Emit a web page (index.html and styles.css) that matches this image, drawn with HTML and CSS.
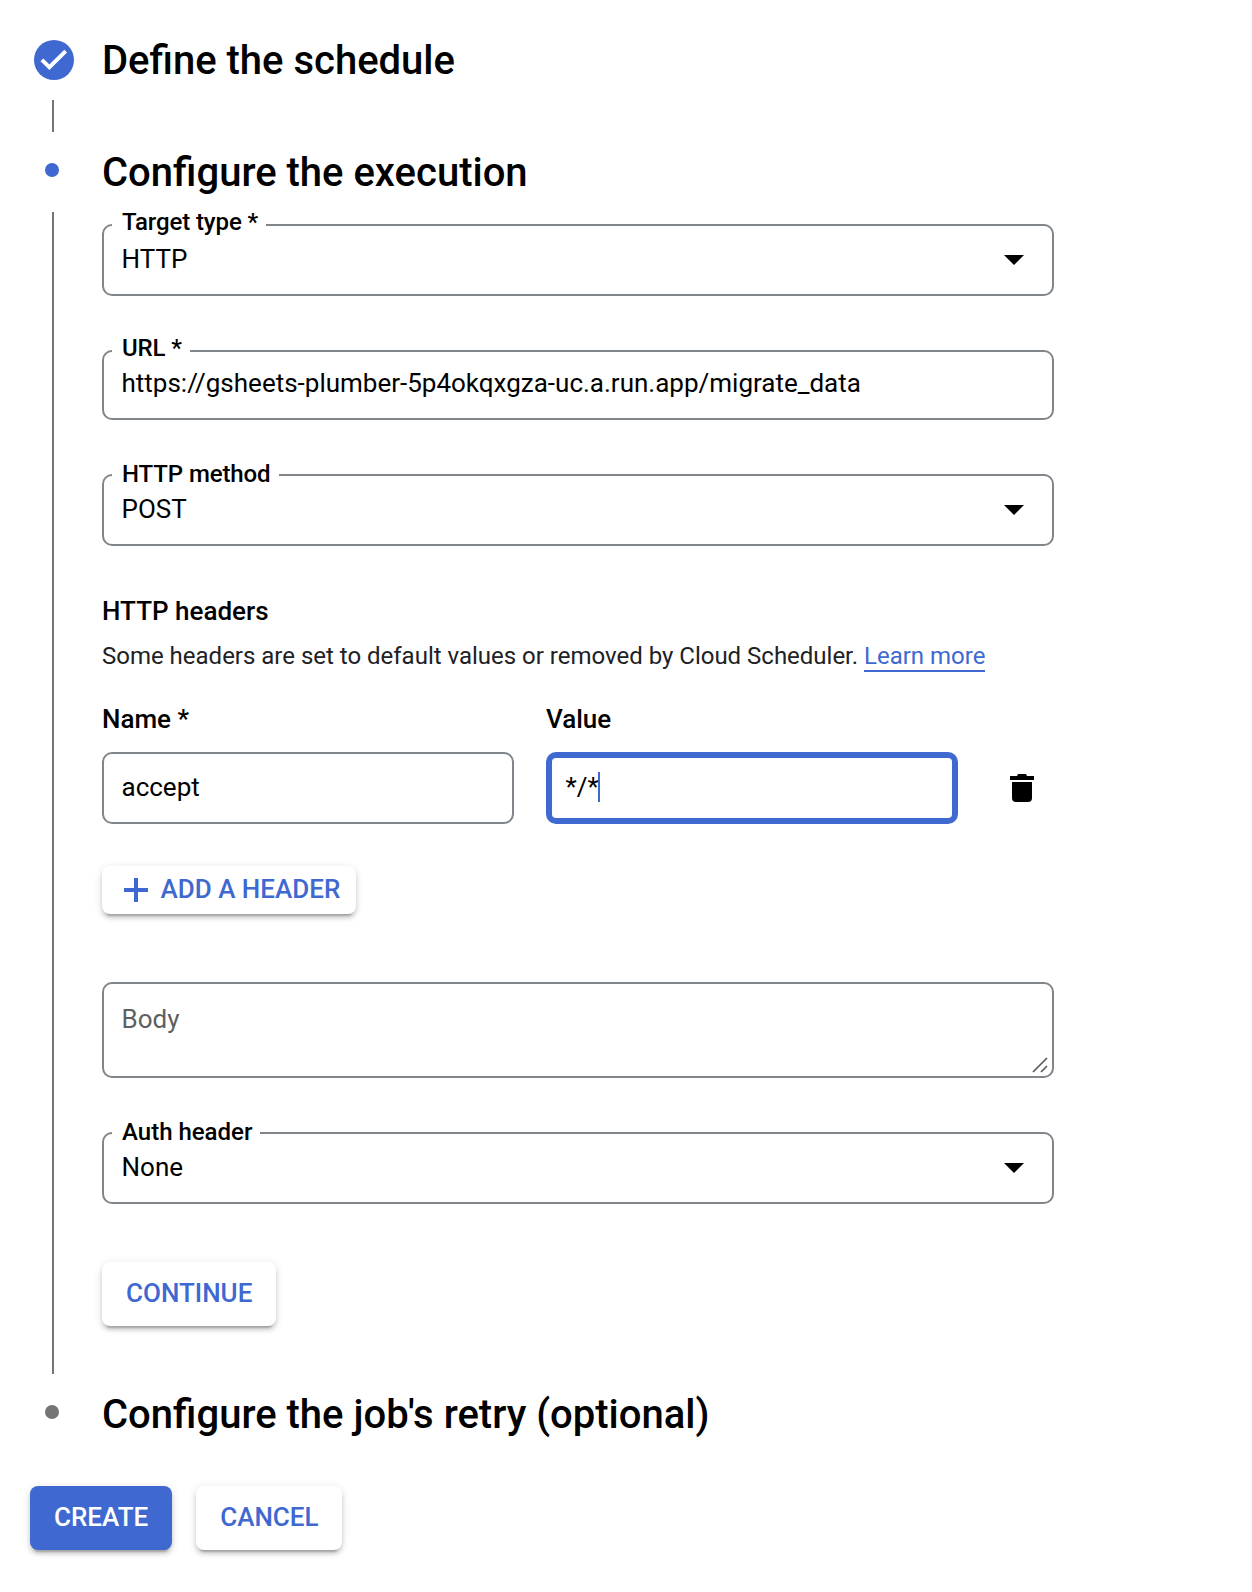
FILE: index.html
```html
<!DOCTYPE html>
<html lang="en">
<head>
<meta charset="utf-8">
<title>Create a job</title>
<link rel="stylesheet" href="styles.css">
</head>
<body>
<main class="page">
  <section class="step step-done">
    <div class="rail">
      <svg class="check" viewBox="0 0 40 40"><circle cx="20" cy="20" r="20" fill="#3f68d0"/><path d="M7.9 19.8 15.4 27.2 31.7 11.2" fill="none" stroke="#fff" stroke-width="3.9"/></svg>
      <span class="line"></span>
    </div>
    <h2 class="title">Define the schedule</h2>
  </section>

  <section class="step step-active">
    <div class="rail">
      <span class="dot dot-active"></span>
      <span class="line"></span>
    </div>
    <div class="content">
      <h2 class="title">Configure the execution</h2>

      <div class="field field-target">
        <span class="label">Target type *</span>
        <span class="text">HTTP</span>
        <svg class="arrow" viewBox="0 0 20 10"><path d="M0 0h20L10 10z"/></svg>
      </div>
      <div class="field field-url">
        <span class="label">URL *</span>
        <span class="text">https://gsheets-plumber-5p4okqxgza-uc.a.run.app/migrate_data</span>
      </div>
      <div class="field field-method">
        <span class="label">HTTP method</span>
        <span class="text">POST</span>
        <svg class="arrow" viewBox="0 0 20 10"><path d="M0 0h20L10 10z"/></svg>
      </div>

      <h3 class="subtitle">HTTP headers</h3>
      <p class="hint">Some headers are set to default values or removed by Cloud Scheduler. <a class="link">Learn more</a></p>

      <div class="header-grid">
        <span class="column-name">Name *</span>
        <span class="column-name">Value</span>
        <span></span>
        <div class="input"><span class="text">accept</span></div>
        <div class="input input-focused"><span class="text">*/*</span><span class="caret"></span></div>
        <svg class="trash" viewBox="0 0 24 28"><path d="M0 2h7l1-2h8l1 2h7v4H0zM2 8h20v16a4 4 0 0 1-4 4H6a4 4 0 0 1-4-4z"/></svg>
      </div>

      <button class="button button-add">
        <svg class="plus" viewBox="0 0 24 24"><path d="M10 0h4v10h10v4H14v10h-4V14H0v-4h10z"/></svg>
        <span class="button-text">ADD A HEADER</span>
      </button>

      <div class="body-field">
        <span class="placeholder">Body</span>
        <svg class="resizer" viewBox="0 0 16 16"><path d="M1 15 15 1M9 15l6-6" fill="none" stroke="#555" stroke-width="1.6"/></svg>
      </div>

      <div class="field field-auth">
        <span class="label">Auth header</span>
        <span class="text">None</span>
        <svg class="arrow" viewBox="0 0 20 10"><path d="M0 0h20L10 10z"/></svg>
      </div>

      <button class="button button-continue">CONTINUE</button>
    </div>
  </section>

  <section class="step step-pending">
    <div class="rail"><span class="dot"></span></div>
    <h2 class="title">Configure the job's retry (optional)</h2>
  </section>

  <div class="actions">
    <button class="button button-primary">CREATE</button>
    <button class="button button-cancel">CANCEL</button>
  </div>
</main>
</body>
</html>
```
FILE: styles.css
```css
* {
  box-sizing: border-box;
}

body {
  margin: 0;
  background: #fff;
  color: #000;
  font-family: Roboto, "Liberation Sans", sans-serif;
}

.page {
  width: 1252px;
  height: 1592px;
  padding: 36px 0 0 30px;
}

.step {
  display: flex;
  width: 1024px;
}

.step-done {
  height: 112px;
}

.step-active {
  height: 1242px;
}

.step-pending {
  height: 96px;
}

.rail {
  display: flex;
  flex-direction: column;
  flex: none;
  width: 72px;
}

.content {
  flex: 1;
  display: flex;
  flex-direction: column;
  align-items: flex-start;
}

.title {
  margin: 0;
  font-size: 40px;
  font-weight: 500;
  line-height: 50px;
}

.check {
  width: 40px;
  height: 40px;
  margin: 4px 0 20px 4px;
}

.line {
  width: 2px;
  margin-left: 22px;
  background: #757575;
}

.step-done .line {
  height: 32px;
}

.step-active .line {
  height: 1162px;
}

.dot {
  width: 14px;
  height: 14px;
  margin: 15px 0 35px 15px;
  border-radius: 50%;
  background: #757575;
}

.dot-active {
  background: #3f68d0;
}

.field {
  position: relative;
  display: flex;
  align-items: center;
  justify-content: space-between;
  width: 952px;
  height: 72px;
  padding: 0 28px 0 17.5px;
  border: 2px solid #80868b;
  border-radius: 10px;
}

.field-target {
  margin-top: 26px;
}

.field-url {
  height: 70px;
  margin-top: 54px;
}

.field-method {
  margin-top: 54px;
}

.field-auth {
  margin-top: 54px;
}

.label {
  position: absolute;
  left: 8px;
  top: -18px;
  padding: 0 8px 0 10px;
  background: #fff;
  font-size: 24px;
  font-weight: 500;
  line-height: 28px;
  letter-spacing: -0.1px;
}

.field-method .label,
.field-auth .label {
  top: -16px;
}

.field-auth .label {
  letter-spacing: 0;
}

.text {
  font-size: 26px;
  line-height: 30px;
}

.field .text {
  padding-bottom: 2px;
}

.field-url .text {
  padding-bottom: 4px;
}

.field-method .text {
  padding-bottom: 2px;
}

.arrow {
  width: 20px;
  height: 10px;
}

.field-target .arrow {
  margin-bottom: 1px;
}

.subtitle {
  margin: 50px 0 0;
  font-size: 26px;
  font-weight: 500;
  line-height: 30px;
}

.hint {
  margin: 15px 0 0;
  color: #202124;
  font-size: 24px;
  line-height: 30px;
  letter-spacing: -0.008px;
  white-space: nowrap;
}

.link {
  border-bottom: 2px solid #3f68d0;
  color: #3f68d0;
}

.header-grid {
  display: grid;
  grid-template-columns: 412px 412px 24px;
  column-gap: 32px;
  row-gap: 18px;
  margin-top: 33px;
}

.column-name {
  font-size: 26px;
  font-weight: 500;
  line-height: 30px;
}

.input {
  display: flex;
  align-items: center;
  height: 72px;
  padding: 0 17.5px 2px;
  border: 2px solid #80868b;
  border-radius: 10px;
}

.input-focused {
  padding: 0 13.5px 2px;
  border: 6px solid #3f68d0;
}

.caret {
  width: 2px;
  height: 30px;
  margin-left: -0.6px;
  background: #3f68d0;
}

.trash {
  width: 24px;
  height: 28px;
  margin: 22px 0 0 20px;
}

.button {
  height: 64px;
  padding: 0 24px 2px;
  border: 0;
  border-radius: 8px;
  background: #fff;
  box-shadow: 0 6px 2px -4px rgba(0, 0, 0, 0.2), 0 4px 4px rgba(0, 0, 0, 0.14), 0 2px 10px rgba(0, 0, 0, 0.12);
  color: #3f68d0;
  font-family: inherit;
  font-size: 26px;
  font-weight: 500;
  line-height: 30px;
}

.button-add {
  display: flex;
  align-items: center;
  gap: 12.5px;
  width: 254px;
  height: 48px;
  margin-top: 42px;
  padding: 0 0 0 22px;
}

.button-text {
  padding-bottom: 2px;
}

.plus {
  width: 24px;
  height: 24px;
  fill: currentColor;
}

.body-field {
  display: flex;
  align-items: flex-start;
  justify-content: space-between;
  width: 952px;
  height: 96px;
  margin-top: 68px;
  padding: 20px 4px 0 17.5px;
  border: 2px solid #80868b;
  border-radius: 10px;
}

.placeholder {
  color: #5f5f5f;
  font-size: 26px;
  line-height: 30px;
}

.resizer {
  align-self: flex-end;
  width: 16px;
  height: 16px;
  margin-bottom: 3px;
}

.button-continue {
  margin-top: 58px;
}

.actions {
  display: flex;
  gap: 24px;
}

.button-primary {
  background: #3f68d0;
  color: #fff;
}

.button-cancel {
  width: 146px;
}
```
